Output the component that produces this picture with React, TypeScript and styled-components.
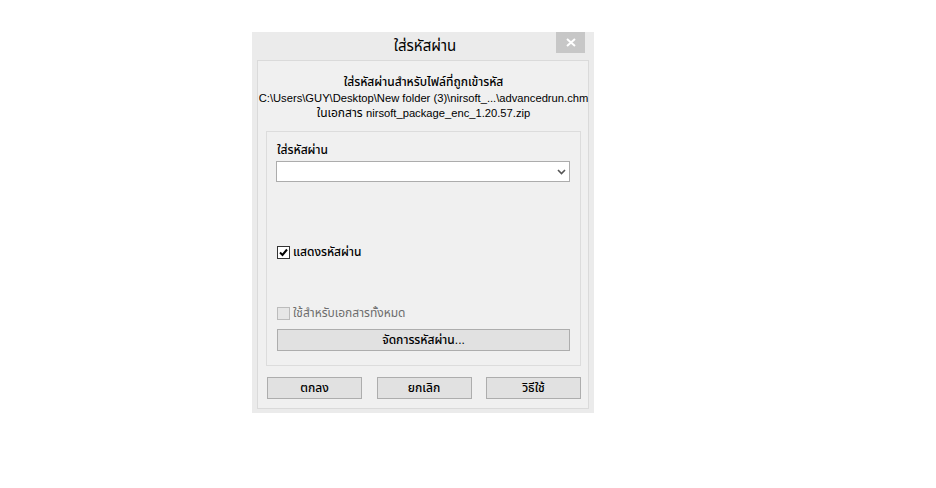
import * as React from "react";
import styled, { createGlobalStyle } from "styled-components";

const GlobalStyle = createGlobalStyle`
  html, body {
    margin: 0;
    padding: 0;
    background: #ffffff;
  }
  body {
    font-family: "Liberation Sans", "Noto Sans Thai", "Noto Sans", sans-serif;
    font-size: 12px;
    color: #000;
  }
`;

export default function App() {
  return (
    <>
      <GlobalStyle />
      <Page>
        <Window>
          <TitleBar>
            <Title>ใส่รหัสผ่าน</Title>
            <CloseButton aria-label="close">
              <svg width="10" height="9" viewBox="0 0 10 9">
                <path d="M1 1 L9 8 M9 1 L1 8" stroke="#fff" strokeWidth="2" />
              </svg>
            </CloseButton>
          </TitleBar>
          <Client>
            <Info>
              <InfoLine $bold>ใส่รหัสผ่านสำหรับไฟล์ที่ถูกเข้ารหัส</InfoLine>
              <InfoLine>
                <Latin>C:\Users\GUY\Desktop\New folder (3)\nirsoft_...\advancedrun.chm</Latin>
              </InfoLine>
              <InfoLine>
                ในเอกสาร <Latin>nirsoft_package_enc_1.20.57.zip</Latin>
              </InfoLine>
            </Info>
            <Group>
              <FieldLabel>ใส่รหัสผ่าน</FieldLabel>
              <Combo>
                <svg width="9" height="6" viewBox="0 0 9 6">
                  <path d="M1 1 L4.5 4.5 L8 1" stroke="#555" strokeWidth="1.6" fill="none" />
                </svg>
              </Combo>
              <CheckRow $top={63}>
                <CheckBox>
                  <svg width="11" height="11" viewBox="0 0 11 11">
                    <path d="M2 5.5 L4.5 8 L9 2.5" stroke="#000" strokeWidth="2" fill="none" />
                  </svg>
                </CheckBox>
                <CheckLabel>แสดงรหัสผ่าน</CheckLabel>
              </CheckRow>
              <CheckRow $top={46}>
                <CheckBox $disabled />
                <CheckLabel $disabled>ใช้สำหรับเอกสารทั้งหมด</CheckLabel>
              </CheckRow>
              <WideButton>จัดการรหัสผ่าน...</WideButton>
            </Group>
            <ButtonRow>
              <DialogButton>ตกลง</DialogButton>
              <DialogButton>ยกเลิก</DialogButton>
              <DialogButton>วิธีใช้</DialogButton>
            </ButtonRow>
          </Client>
        </Window>
      </Page>
    </>
  );
}

const Page = styled.div`
  padding: 32px 0 0 252px;
`;

const Window = styled.div`
  width: 342px;
  height: 381px;
  box-sizing: border-box;
  background: #ebebeb;
  display: flex;
  flex-direction: column;
  padding: 0 5px 4px 5px;
`;

const TitleBar = styled.div`
  height: 29px;
  position: relative;
  display: flex;
  align-items: center;
  justify-content: center;
`;

const Title = styled.div`
  font-size: 15px;
  margin-left: 4px;
`;

const CloseButton = styled.div`
  position: absolute;
  top: 0;
  right: 4px;
  width: 29px;
  height: 21px;
  background: #c7c7c7;
  display: flex;
  align-items: center;
  justify-content: center;
`;

const Client = styled.div`
  flex: 1;
  background: #f0f0f0;
  border: 1px solid #dadada;
  display: flex;
  flex-direction: column;
  padding: 0 7px 9px 8px;
`;

const Info = styled.div`
  margin-top: 14px;
  display: flex;
  flex-direction: column;
  align-items: center;
  height: 56px;
`;

const InfoLine = styled.div<{ $bold?: boolean }>`
  line-height: 15.5px;
  white-space: nowrap;
  font-weight: ${(p) => (p.$bold ? 500 : 400)};
`;

const Latin = styled.span`
  font-size: 11.2px;
  font-weight: 400;
`;

const Group = styled.div`
  border: 1px solid #dcdcdc;
  height: 235px;
  box-sizing: border-box;
  display: flex;
  flex-direction: column;
  padding: 10px 10px 0 9px;
`;

const FieldLabel = styled.div`
  font-weight: 500;
  line-height: 16px;
  margin-left: 1px;
`;

const Combo = styled.div`
  margin-top: 3px;
  height: 21px;
  box-sizing: border-box;
  background: #fff;
  border: 1px solid #acacac;
  display: flex;
  align-items: center;
  justify-content: flex-end;
  padding-right: 3px;
`;

const CheckRow = styled.div<{ $top: number }>`
  margin-top: ${(p) => p.$top}px;
  display: flex;
  align-items: center;
  gap: 3px;
  margin-left: 1px;
`;

const CheckBox = styled.div<{ $disabled?: boolean }>`
  width: 13px;
  height: 13px;
  box-sizing: border-box;
  border: 1px solid ${(p) => (p.$disabled ? "#bcbcbc" : "#333")};
  background: ${(p) => (p.$disabled ? "#e6e6e6" : "#fff")};
  display: flex;
  align-items: center;
  justify-content: center;
`;

const CheckLabel = styled.div<{ $disabled?: boolean }>`
  line-height: 15px;
  color: ${(p) => (p.$disabled ? "#6d6d6d" : "#000")};
  font-weight: ${(p) => (p.$disabled ? 400 : 500)};
`;

const ButtonBase = styled.div`
  height: 22px;
  box-sizing: border-box;
  background: #e1e1e1;
  border: 1px solid #adadad;
  display: flex;
  align-items: center;
  justify-content: center;
  font-weight: 500;
`;

const WideButton = styled(ButtonBase)`
  margin-top: 8px;
  margin-left: 1px;
`;

const ButtonRow = styled.div`
  margin-top: 11px;
  padding-left: 1px;
  display: flex;
  justify-content: space-between;
`;

const DialogButton = styled(ButtonBase)`
  width: 95px;
`;
